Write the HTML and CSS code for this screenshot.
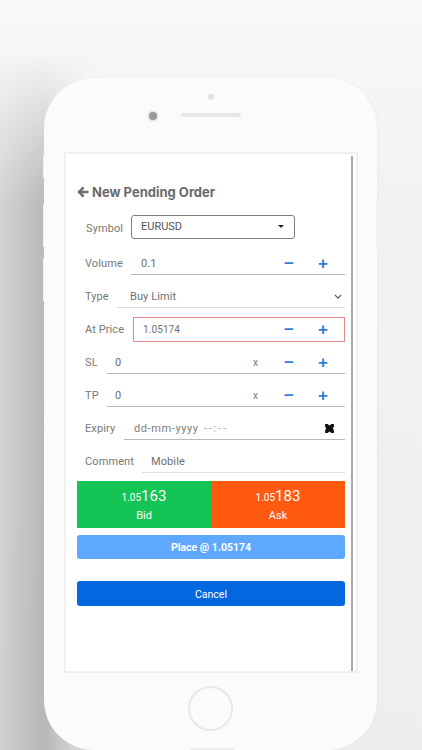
FILE: index.html
```html
<!DOCTYPE html>
<html lang="en">
<head>
<meta charset="utf-8">
<title>New Pending Order</title>
<link rel="stylesheet" href="styles.css">
</head>
<body>
<div class="stage">
  <div class="phone">
    <span class="side side-l1"></span>
    <span class="side side-l2"></span>
    <span class="side side-l3"></span>
    <span class="side side-r"></span>
    <div class="top">
      <span class="sensor"></span>
      <span class="camera"></span>
      <span class="speaker"></span>
    </div>
    <main class="screen">
      <div class="content">
        <h1 class="title">
          <svg class="back" viewBox="0 0 12 12" width="12" height="12"><path d="M6.600 1.400 2 6l4.600 4.600M2.400 6H11.500" fill="none" stroke="#6e6e6e" stroke-width="2.600"/></svg>
          New Pending Order
        </h1>
        <div class="row row-symbol">
          <span class="label label-symbol">Symbol</span>
          <div class="select"><span>EURUSD</span><i class="caret"></i></div>
        </div>
        <div class="row">
          <span class="label">Volume</span>
          <div class="field field-volume"><span class="value">0.1</span><b class="minus">−</b><b class="plus">+</b></div>
        </div>
        <div class="row">
          <span class="label">Type</span>
          <div class="field field-type thin"><span class="value">Buy Limit</span>
            <svg class="chev" viewBox="0 0 10 6" width="8" height="5"><path d="M1 1l4 4 4-4" fill="none" stroke="#555" stroke-width="1.500"/></svg>
          </div>
        </div>
        <div class="row">
          <span class="label">At Price</span>
          <div class="field field-price"><span class="value num">1.05174</span><b class="minus">−</b><b class="plus">+</b></div>
        </div>
        <div class="row">
          <span class="label">SL</span>
          <div class="field field-sl"><span class="value">0</span><em class="x">x</em><b class="minus">−</b><b class="plus">+</b></div>
        </div>
        <div class="row">
          <span class="label">TP</span>
          <div class="field field-tp"><span class="value">0</span><em class="x">x</em><b class="minus">−</b><b class="plus">+</b></div>
        </div>
        <div class="row">
          <span class="label">Expiry</span>
          <div class="field field-expiry"><span class="value date">dd-mm-yyyy <span class="time">--:--</span></span>
            <svg class="cal" viewBox="0 0 10 10" width="11" height="11"><path d="M1 1h2.500l1 1h1l1-1H9v2.500L8 5l1 1.500V9H6.500l-1-1h-1l-1 1H1V6.500L2 5 1 3.500z" fill="#111"/></svg>
          </div>
        </div>
        <div class="row">
          <span class="label">Comment</span>
          <div class="field field-comment thin"><span class="value">Mobile</span></div>
        </div>
        <div class="quotes">
          <div class="quote bid"><div class="price"><small>1.05</small>163</div><div class="side-name">Bid</div></div>
          <div class="quote ask"><div class="price"><small>1.05</small>183</div><div class="side-name">Ask</div></div>
        </div>
        <button class="btn place">Place @ 1.05174</button>
        <button class="btn cancel">Cancel</button>
      </div>
    </main>
    <div class="home"></div>
    <div class="notch"></div>
  </div>
</div>
</body>
</html>
```
FILE: styles.css
```css
* { box-sizing: border-box; }
html, body { margin: 0; height: 750px; overflow: hidden; }
body {
  position: relative;
  font-family: "Roboto", "Liberation Sans", sans-serif;
  background: linear-gradient(180deg, #f8f8f8 0, #f2f2f2 190px, #efeeed 100%);
}
body::before {
  content: "";
  position: absolute;
  left: 0;
  top: 0;
  width: 110px;
  height: 750px;
  background: linear-gradient(90deg, rgba(0,0,0,.12) 0, rgba(0,0,0,.23) 44px, rgba(0,0,0,0) 100px);
  -webkit-mask-image: linear-gradient(180deg, transparent 50px, #000 200px);
  mask-image: linear-gradient(180deg, transparent 50px, #000 200px);
}
.stage { position: relative; padding: 78px 0 0 44px; }
.phone {
  position: relative;
  width: 333px;
  height: 672px;
  border-radius: 50px;
  background: #fbfbfb;
  box-shadow: 1px 0 3px rgba(0,0,0,.03);
  display: flex;
  flex-direction: column;
  align-items: flex-start;
}
.side { position: absolute; width: 1.500px; background: #f1f1f3; border-radius: 1px; }
.side-l1 { left: -1.500px; top: 77px; height: 23px; }
.side-l2 { left: -1.500px; top: 126px; height: 43px; }
.side-l3 { left: -1.500px; top: 180px; height: 43px; }
.side-r { left: 332px; top: 126px; height: 43px; }
.top { position: relative; height: 74px; width: 100%; }
.sensor { position: absolute; left: 164px; top: 16px; width: 6px; height: 6px; border-radius: 50%; background: #e2e2e2; }
.camera { position: absolute; left: 105px; top: 34px; width: 8px; height: 8px; border-radius: 50%; background: #9a9a9a; box-shadow: 0 0 0 1.500px #e4e4e4; }
.speaker { position: absolute; left: 137px; top: 35px; width: 60px; height: 4px; border-radius: 2px; background: #e6e6e6; }
.screen {
  position: relative;
  margin-left: 20px;
  width: 294px;
  height: 521px;
  background: #fff;
  border: 2px solid #f0f0f0;
  padding: 0 11px;
}
.screen::after {
  content: "";
  position: absolute;
  right: 3px;
  top: 2px;
  bottom: 0;
  width: 2px;
  background: #a9a9a9;
}
.content { width: 268px; padding-top: 29px; }
.title {
  display: flex;
  align-items: center;
  gap: 3px;
  margin: 0;
  height: 18px;
  font-size: 13px;
  font-weight: 700;
  font-family: "Inter", "Roboto", sans-serif;
  color: #6a6a6a;
}
.back { flex: none; }
.row {
  display: flex;
  align-items: center;
  height: 33px;
  font-size: 11px;
  color: #777;
}
.row-symbol { height: 25px; margin: 13px 0 8px; }
.label { flex: none; margin-left: 8px; font-size: 11px; color: #777; letter-spacing: .1px; }
.label-symbol { margin-left: 9px; width: 45px; padding-top: 3px; }
.select {
  width: 164px;
  height: 24px;
  border: 1px solid #7d7d7d;
  border-radius: 3px;
  display: flex;
  align-items: center;
  justify-content: space-between;
  padding: 0 10px 0 9px;
  font-size: 11px;
  color: #555;
}
.caret { width: 0; height: 0; border: 3px solid transparent; border-top: 3.500px solid #222; border-bottom: 0; }
.field {
  margin-left: auto;
  height: 24px;
  display: flex;
  align-items: center;
  border-bottom: 1.500px solid #b9b9b9;
  padding-top: 3px;
  position: relative;
  top: -1px;
}
.field.thin { border-bottom: 1px solid #ddd; }
.value { color: #6f6f6f; font-size: 11px; letter-spacing: .1px; }
.num { font-size: 10px; }
.minus, .plus { position: absolute; color: #2f7fd8; font-size: 17px; font-weight: 700; line-height: 20px; font-family: "Liberation Sans", sans-serif; }
.minus { right: 51px; }
.plus { right: 17px; }
.field-price .minus { right: 50px; }
.field-price .plus { right: 16px; }
.x { position: absolute; right: 87px; font-style: normal; font-size: 10px; color: #777; }
.field-volume { width: 214px; padding-left: 10px; }
.field-type { width: 228px; padding-left: 13px; }
.field-price { width: 212px; height: 25px; border: 1px solid #e3878a; padding: 0 0 0 9px; top: 0; }
.field-sl, .field-tp { width: 238px; padding-left: 8px; }
.field-expiry { width: 221px; padding-left: 10px; }
.field-comment { width: 203px; padding-left: 9px; }
.date { letter-spacing: .6px; color: #7d7d7d; }
.time { color: #aaa; letter-spacing: 1.800px; margin-left: 2px; }
.chev { position: absolute; right: 3px; }
.cal { position: absolute; right: 10px; }
.quotes { display: flex; height: 47px; margin-top: 3px; }
.quote {
  color: #fff;
  text-align: center;
  padding-top: 5px;
}
.bid { width: 134px; background: #14c454; }
.ask { width: 134px; background: #ff5a10; }
.price { font-size: 15px; line-height: 20px; }
.price small { font-size: 10px; }
.side-name { font-size: 11px; line-height: 14px; margin-top: 1px; }
.btn {
  display: block;
  width: 100%;
  height: 24px;
  border: 0;
  border-radius: 3px;
  color: #fff;
  font-family: inherit;
  font-size: 10.500px;
  padding: 0;
}
.place { margin-top: 7px; background: #5ea8ff; font-weight: 700; }
.cancel { margin-top: 22px; height: 25px; background: #0368e0; padding-top: 1px; }
.home {
  margin: 13px 0 0 144px;
  width: 45px;
  height: 45px;
  border-radius: 50%;
  border: 2px solid #e8e8e8;
}
.notch {
  position: absolute;
  left: 146px;
  bottom: 0;
  width: 45px;
  height: 2px;
  border-radius: 2px 2px 0 0;
  background: #ececec;
}
```
